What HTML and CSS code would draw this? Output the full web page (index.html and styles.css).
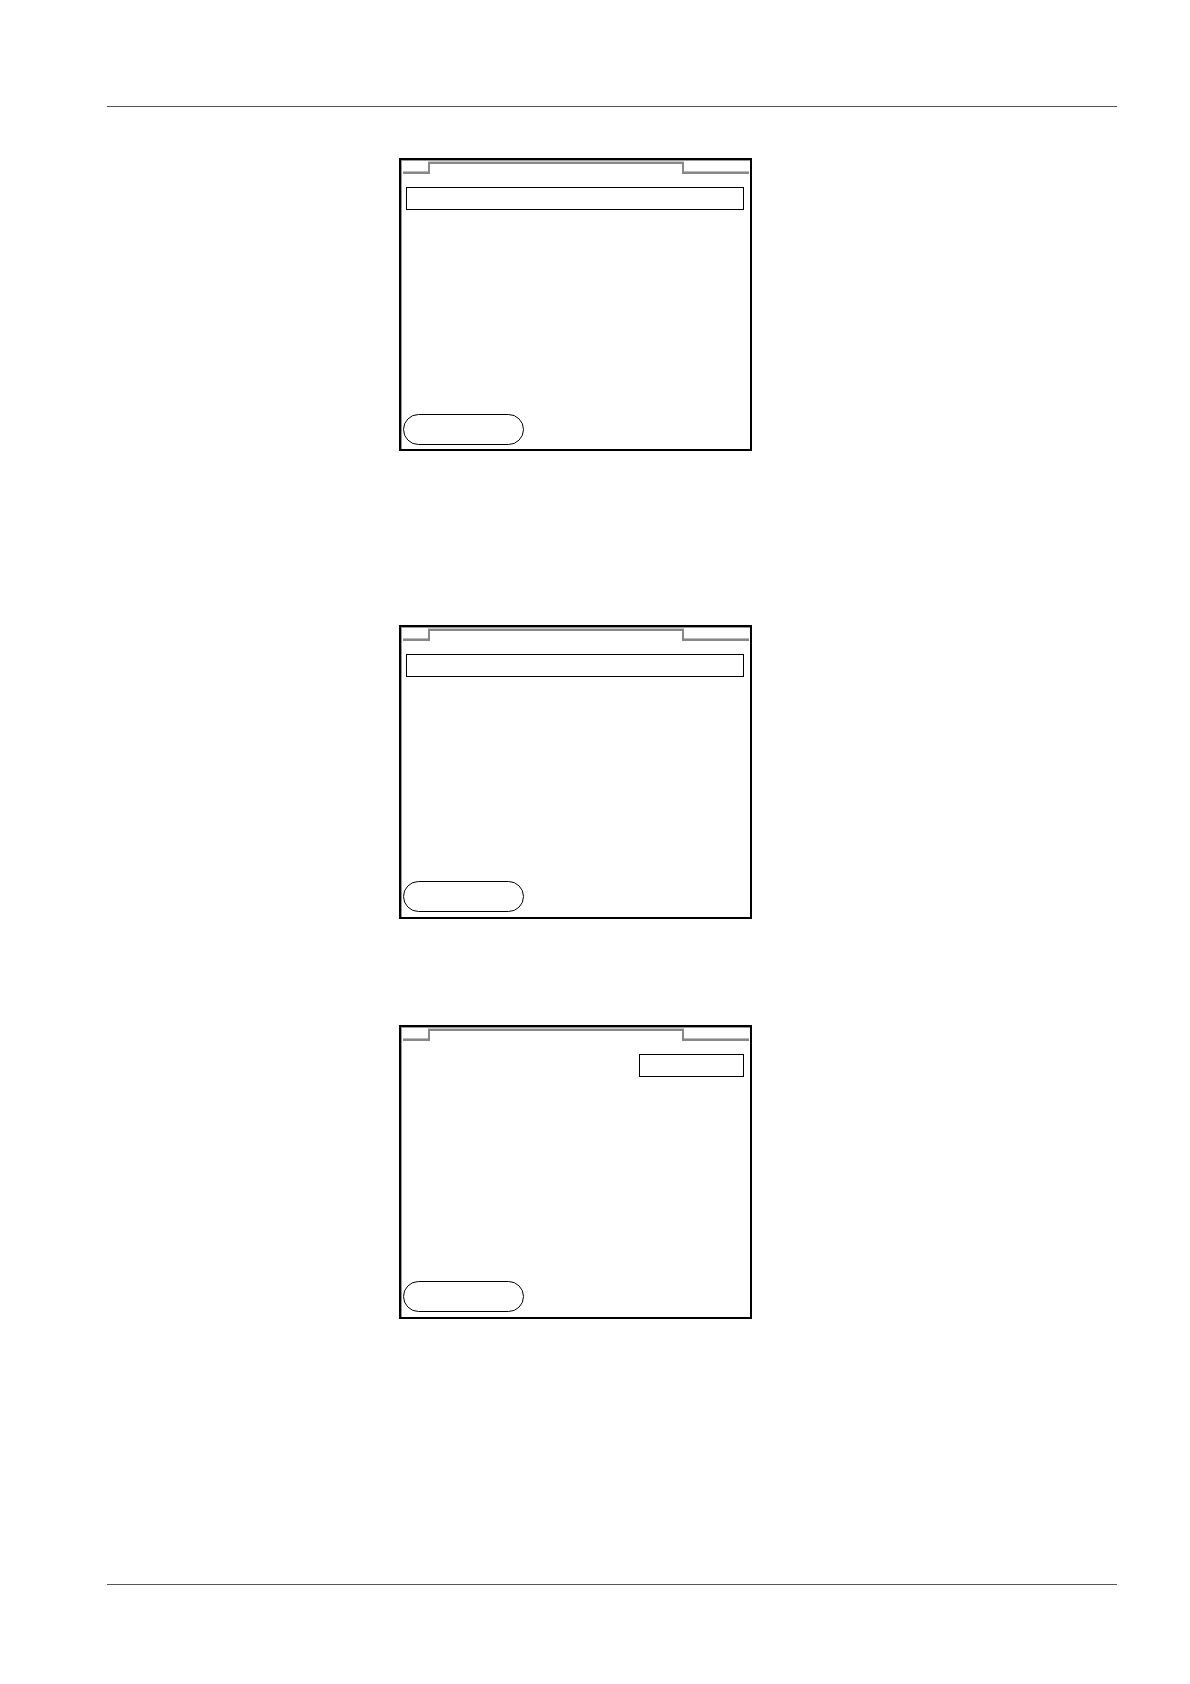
FILE: index.html
```
<!DOCTYPE html>
<html lang="en">
<head>
    <meta charset="UTF-8">
    <title>Screens</title>
    <link rel="stylesheet" href="styles.css">
</head>
<body>
    <main class="sheet">
        <section class="step first">
            <div class="screen">
                <div class="tabs">
                    <span class="tab-left"></span>
                    <span class="tab-active"></span>
                    <span class="tab-right"></span>
                </div>
                <input type="text" class="field" aria-label="Entry">
                <button type="button" class="key" aria-label="Back"></button>
            </div>
        </section>

        <section class="step second">
            <div class="screen">
                <div class="tabs">
                    <span class="tab-left"></span>
                    <span class="tab-active"></span>
                    <span class="tab-right"></span>
                </div>
                <input type="text" class="field" aria-label="Entry">
                <button type="button" class="key" aria-label="Back"></button>
            </div>
        </section>

        <section class="step">
            <div class="screen">
                <div class="tabs">
                    <span class="tab-left"></span>
                    <span class="tab-active"></span>
                    <span class="tab-right"></span>
                </div>
                <input type="text" class="field short" aria-label="Value">
                <button type="button" class="key" aria-label="Back"></button>
            </div>
        </section>
    </main>
</body>
</html>
```

FILE: styles.css
```
* {
    box-sizing: border-box;
}

body {
    margin: 0;
    background-color: #fff;
    font-family: "Liberation Sans", Arial, sans-serif;
}

/* page area between the top and bottom rules */
.sheet {
    margin: 106px 73px 99px 107px;
    padding: 51px 0 265px 292px;
    border-top: 1px solid #555;
    border-bottom: 1px solid #555;
}

.first {
    margin-bottom: 174px;
}

.second {
    margin-bottom: 106px;
}

.screen {
    display: flex;
    flex-direction: column;
    width: 353px;
    max-width: 100%;
    height: 294px;
    padding: 2px 1px 5px 2px;
    border: 2px solid #000;
    box-shadow: inset 1px 1px 0 #999;
}

.first .screen {
    height: 293px;
    padding-bottom: 4px;
}

/* stepped line that forms the tab, with a lighter edge above it */
.tabs {
    display: flex;
    height: 12px;
}

.tab-left {
    width: 25px;
    border-bottom: 2px solid #888;
    box-shadow: inset 0 -1px 0 #bbb;
}

.tab-active {
    width: 256px;
    border: 2px solid #888;
    border-bottom: none;
    box-shadow: 0 -1px 0 #ccc;
}

.tab-right {
    flex: 1;
    border-bottom: 2px solid #888;
    box-shadow: inset 0 -1px 0 #bbb;
}

.field {
    width: 338px;
    height: 23px;
    margin: 13px 5px 0 3px;
    padding: 0 4px;
    border: 1px solid #000;
    background-color: #fff;
    font: inherit;
    font-size: 14px;
}

.short {
    width: 105px;
    align-self: flex-end;
}

.key {
    width: 121px;
    height: 31px;
    margin-top: auto;
    border: 1px solid #000;
    border-radius: 16px;
    background-color: #fff;
}
```
